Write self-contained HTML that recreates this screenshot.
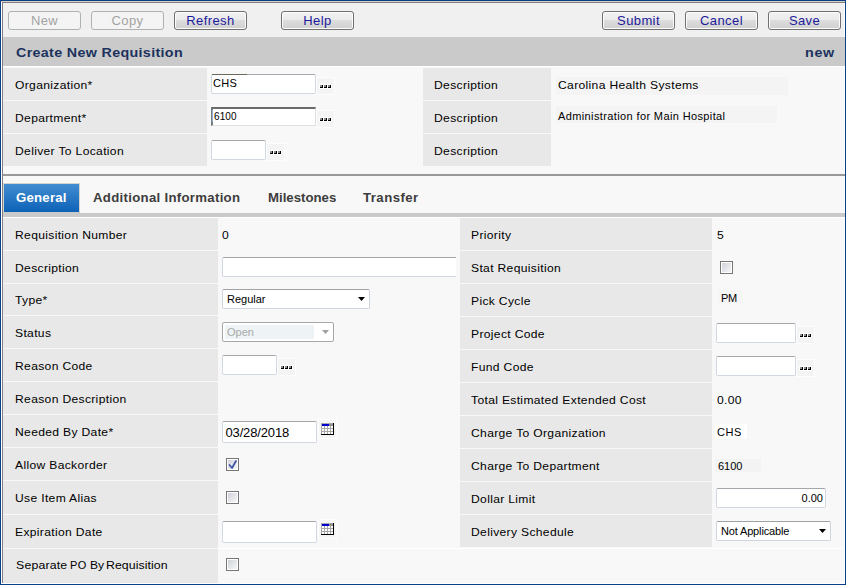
<!DOCTYPE html><html><head><meta charset="utf-8"><style>
html,body{margin:0;padding:0;}
body{width:848px;height:586px;position:relative;overflow:hidden;background:#fff;font-family:'Liberation Sans', sans-serif;}
body>div{position:absolute;box-sizing:border-box;}
.t{white-space:nowrap;}
.btn{border:1px solid #707070;border-radius:3px;background:linear-gradient(#f2f2f2 0%,#ebebeb 45%,#dddddd 50%,#cfcfcf 100%);box-shadow:inset 0 0 0 1px #fcfcfc;text-align:center;}
.btn span{position:absolute;left:0;right:0;top:2px;font-size:13px;line-height:13px;color:#1d1a9c;letter-spacing:0.4px;}
.btn.dis{border-color:#adb2b5;background:#f4f4f4;box-shadow:none;}
.btn.dis span{color:#a3a3a3;}
.inp{background:#fff;border:1px solid #d1d8e2;border-top-color:#a4a6ab;border-radius:2px;}
.inp.org{border-top:1px solid #a8a8b0;}
.inp.inset{border:1px solid #e0e0e0;border-top:2px solid #6a6a6a;border-left:2px solid #7a7a7a;border-radius:0;}
.inp.noright{border-right:none;border-radius:2px 0 0 2px;}
.sel{background:#fff;border:1px solid #cfd5dd;border-top-color:#a0a2a6;border-radius:2px;}
.seld{background:#fff;border:1px solid #a7a7a7;border-radius:2px;}
.cb{width:13px;height:13px;border:1px solid #767676;background:#fff;}
.cb i{position:absolute;left:1px;top:1px;width:9px;height:9px;background:linear-gradient(135deg,#cfd3da,#f6f6f6);}
.calf{width:19px;height:20px;background:#f6f6f6;box-shadow:inset 0 0 0 1px #fdfdfd;}
</style></head><body>
<div style="left:0px;top:0px;width:846px;height:585px;background:#0b3f87"></div>
<div style="left:1px;top:1px;width:844px;height:583px;background:#ffffff"></div>
<div style="left:1px;top:1px;width:844px;height:1px;background:#d4d0c8"></div>
<div style="left:2px;top:2px;width:843px;height:1px;background:#808080"></div>
<div style="left:2px;top:2px;width:842px;height:581px;background:#808080"></div>
<div style="left:3px;top:3px;width:841px;height:580px;background:#f8f8f8"></div>
<div style="left:3px;top:3px;width:841px;height:34px;background:#f0f0f0"></div>
<div class="btn dis" style="left:8px;top:11px;width:73px;height:19px;"><span>New</span></div>
<div class="btn dis" style="left:91px;top:11px;width:73px;height:19px;"><span>Copy</span></div>
<div class="btn" style="left:174px;top:11px;width:73px;height:19px;"><span>Refresh</span></div>
<div class="btn" style="left:281px;top:11px;width:73px;height:19px;"><span>Help</span></div>
<div class="btn" style="left:602px;top:11px;width:73px;height:19px;"><span>Submit</span></div>
<div class="btn" style="left:685px;top:11px;width:73px;height:19px;"><span>Cancel</span></div>
<div class="btn" style="left:768px;top:11px;width:73px;height:19px;"><span>Save</span></div>
<div style="left:3px;top:37px;width:842px;height:29px;background:#c9cac9"></div>
<div style="left:3px;top:66px;width:841px;height:1px;background:#ffffff"></div>
<div class="t" style="left:16px;top:46px;font-size:13px;line-height:13px;font-weight:bold;color:#1c325e;letter-spacing:0.3px;transform:scaleX(1.1);transform-origin:0 0;">Create New Requisition</div>
<div class="t" style="left:804.5px;top:46px;font-size:13px;line-height:13px;font-weight:bold;color:#1c325e;letter-spacing:0.6px;transform:scaleX(1.1);transform-origin:0 0;">new</div>
<div style="left:3px;top:68px;width:204px;height:32px;background:#e8e8e8"></div>
<div style="left:423px;top:68px;width:128px;height:32px;background:#e8e8e8"></div>
<div class="t" style="left:15px;top:80px;font-size:11px;line-height:11px;font-weight:normal;color:#000000;letter-spacing:0.3px;transform:scaleX(1.1);transform-origin:0 0;">Organization*</div>
<div class="t" style="left:434px;top:80px;font-size:11px;line-height:11px;font-weight:normal;color:#000000;letter-spacing:0.3px;transform:scaleX(1.1);transform-origin:0 0;">Description</div>
<div style="left:3px;top:101px;width:204px;height:32px;background:#e8e8e8"></div>
<div style="left:423px;top:101px;width:128px;height:32px;background:#e8e8e8"></div>
<div class="t" style="left:15px;top:113px;font-size:11px;line-height:11px;font-weight:normal;color:#000000;letter-spacing:0.3px;transform:scaleX(1.1);transform-origin:0 0;">Department*</div>
<div class="t" style="left:434px;top:113px;font-size:11px;line-height:11px;font-weight:normal;color:#000000;letter-spacing:0.3px;transform:scaleX(1.1);transform-origin:0 0;">Description</div>
<div style="left:3px;top:134px;width:204px;height:32px;background:#e8e8e8"></div>
<div style="left:423px;top:134px;width:128px;height:32px;background:#e8e8e8"></div>
<div class="t" style="left:15px;top:146px;font-size:11px;line-height:11px;font-weight:normal;color:#000000;letter-spacing:0.3px;transform:scaleX(1.1);transform-origin:0 0;">Deliver To Location</div>
<div class="t" style="left:434px;top:146px;font-size:11px;line-height:11px;font-weight:normal;color:#000000;letter-spacing:0.3px;transform:scaleX(1.1);transform-origin:0 0;">Description</div>
<div style="left:556px;top:77px;width:232px;height:18px;background:#f4f4f4"></div>
<div class="t" style="left:558px;top:80px;font-size:11px;line-height:11px;font-weight:normal;color:#000000;letter-spacing:0.3px;transform:scaleX(1.1);transform-origin:0 0;">Carolina Health Systems</div>
<div style="left:556px;top:106px;width:221px;height:17px;background:#f4f4f4"></div>
<div class="t" style="left:558px;top:111px;font-size:11px;line-height:11px;font-weight:normal;color:#000000;letter-spacing:0.38px;">Administration for Main Hospital</div>
<div class="inp org" style="left:211px;top:74px;width:105px;height:20px;"></div>
<div style="left:212px;top:74px;width:35px;height:1px;background:#6b6a5c"></div>
<div class="t" style="left:213px;top:78px;font-size:11px;line-height:11px;font-weight:normal;color:#000000;letter-spacing:0.3px;">CHS</div>
<div style="left:316px;top:77px;width:19px;height:18px;background:#f4f4f4;box-shadow:inset 0 0 0 1px #fdfdfd"></div>
<div style="left:319px;top:84px;width:5px;height:5px;background:#ffffff"></div>
<div style="left:323px;top:84px;width:5px;height:5px;background:#ffffff"></div>
<div style="left:327px;top:84px;width:5px;height:5px;background:#ffffff"></div>
<div style="left:320px;top:85px;width:3px;height:3px;background:#000"></div>
<div style="left:320px;top:85px;width:2px;height:2px;background:#8c8c8c"></div>
<div style="left:324px;top:85px;width:3px;height:3px;background:#000"></div>
<div style="left:324px;top:85px;width:2px;height:2px;background:#8c8c8c"></div>
<div style="left:328px;top:85px;width:3px;height:3px;background:#000"></div>
<div style="left:328px;top:85px;width:2px;height:2px;background:#8c8c8c"></div>
<div class="inp inset" style="left:211px;top:107px;width:105px;height:19px;"></div>
<div style="left:212px;top:110px;width:1px;height:12px;background:#8fb0d8"></div>
<div class="t" style="left:214px;top:112px;font-size:10px;line-height:10px;font-weight:normal;color:#000000;letter-spacing:0.1px;">6100</div>
<div style="left:316px;top:110px;width:19px;height:18px;background:#f4f4f4;box-shadow:inset 0 0 0 1px #fdfdfd"></div>
<div style="left:319px;top:117px;width:5px;height:5px;background:#ffffff"></div>
<div style="left:323px;top:117px;width:5px;height:5px;background:#ffffff"></div>
<div style="left:327px;top:117px;width:5px;height:5px;background:#ffffff"></div>
<div style="left:320px;top:118px;width:3px;height:3px;background:#000"></div>
<div style="left:320px;top:118px;width:2px;height:2px;background:#8c8c8c"></div>
<div style="left:324px;top:118px;width:3px;height:3px;background:#000"></div>
<div style="left:324px;top:118px;width:2px;height:2px;background:#8c8c8c"></div>
<div style="left:328px;top:118px;width:3px;height:3px;background:#000"></div>
<div style="left:328px;top:118px;width:2px;height:2px;background:#8c8c8c"></div>
<div class="inp" style="left:211px;top:140px;width:55px;height:20px;"></div>
<div style="left:266px;top:143px;width:19px;height:18px;background:#f4f4f4;box-shadow:inset 0 0 0 1px #fdfdfd"></div>
<div style="left:269px;top:150px;width:5px;height:5px;background:#ffffff"></div>
<div style="left:273px;top:150px;width:5px;height:5px;background:#ffffff"></div>
<div style="left:277px;top:150px;width:5px;height:5px;background:#ffffff"></div>
<div style="left:270px;top:151px;width:3px;height:3px;background:#000"></div>
<div style="left:270px;top:151px;width:2px;height:2px;background:#8c8c8c"></div>
<div style="left:274px;top:151px;width:3px;height:3px;background:#000"></div>
<div style="left:274px;top:151px;width:2px;height:2px;background:#8c8c8c"></div>
<div style="left:278px;top:151px;width:3px;height:3px;background:#000"></div>
<div style="left:278px;top:151px;width:2px;height:2px;background:#8c8c8c"></div>
<div style="left:3px;top:174px;width:842px;height:2px;background:#999999"></div>
<div style="left:3px;top:183px;width:77px;height:29px;background:#d6d2cc"></div>
<div style="left:4px;top:184px;width:75px;height:28px;background:linear-gradient(#428dd2,#0d62b6)"></div>
<div style="left:3px;top:212px;width:77px;height:1px;background:#c9cac9"></div>
<div class="t" style="left:16px;top:192px;font-size:12px;line-height:12px;font-weight:bold;color:#ffffff;letter-spacing:0.2px;transform:scaleX(1.1);transform-origin:0 0;">General</div>
<div class="t" style="left:93px;top:192px;font-size:12px;line-height:12px;font-weight:bold;color:#3d3d3d;letter-spacing:0.27px;transform:scaleX(1.1);transform-origin:0 0;">Additional Information</div>
<div class="t" style="left:267.5px;top:192px;font-size:12px;line-height:12px;font-weight:bold;color:#3d3d3d;letter-spacing:0.0px;transform:scaleX(1.1);transform-origin:0 0;">Milestones</div>
<div class="t" style="left:362.5px;top:192px;font-size:12px;line-height:12px;font-weight:bold;color:#3d3d3d;letter-spacing:0.4px;transform:scaleX(1.1);transform-origin:0 0;">Transfer</div>
<div style="left:3px;top:213px;width:842px;height:4px;background:#c9cac9"></div>
<div style="left:3px;top:217px;width:841px;height:1px;background:#ffffff"></div>
<div style="left:3px;top:218px;width:215px;height:32px;background:#e8e8e8"></div>
<div class="t" style="left:15px;top:230px;font-size:11px;line-height:11px;font-weight:normal;color:#000000;letter-spacing:0.3px;transform:scaleX(1.1);transform-origin:0 0;">Requisition Number</div>
<div style="left:3px;top:251px;width:215px;height:32px;background:#e8e8e8"></div>
<div class="t" style="left:15px;top:263px;font-size:11px;line-height:11px;font-weight:normal;color:#000000;letter-spacing:0.3px;transform:scaleX(1.1);transform-origin:0 0;">Description</div>
<div style="left:3px;top:284px;width:215px;height:31px;background:#e8e8e8"></div>
<div class="t" style="left:15px;top:295px;font-size:11px;line-height:11px;font-weight:normal;color:#000000;letter-spacing:0.3px;transform:scaleX(1.1);transform-origin:0 0;">Type*</div>
<div style="left:3px;top:316px;width:215px;height:32px;background:#e8e8e8"></div>
<div class="t" style="left:15px;top:328px;font-size:11px;line-height:11px;font-weight:normal;color:#000000;letter-spacing:0.3px;transform:scaleX(1.1);transform-origin:0 0;">Status</div>
<div style="left:3px;top:349px;width:215px;height:32px;background:#e8e8e8"></div>
<div class="t" style="left:15px;top:361px;font-size:11px;line-height:11px;font-weight:normal;color:#000000;letter-spacing:0.3px;transform:scaleX(1.1);transform-origin:0 0;">Reason Code</div>
<div style="left:3px;top:382px;width:215px;height:32px;background:#e8e8e8"></div>
<div class="t" style="left:15px;top:394px;font-size:11px;line-height:11px;font-weight:normal;color:#000000;letter-spacing:0.3px;transform:scaleX(1.1);transform-origin:0 0;">Reason Description</div>
<div style="left:3px;top:415px;width:215px;height:32px;background:#e8e8e8"></div>
<div class="t" style="left:15px;top:427px;font-size:11px;line-height:11px;font-weight:normal;color:#000000;letter-spacing:0.3px;transform:scaleX(1.1);transform-origin:0 0;">Needed By Date*</div>
<div style="left:3px;top:448px;width:215px;height:32px;background:#e8e8e8"></div>
<div class="t" style="left:15px;top:460px;font-size:11px;line-height:11px;font-weight:normal;color:#000000;letter-spacing:0.3px;transform:scaleX(1.1);transform-origin:0 0;">Allow Backorder</div>
<div style="left:3px;top:481px;width:215px;height:33px;background:#e8e8e8"></div>
<div class="t" style="left:15px;top:493px;font-size:11px;line-height:11px;font-weight:normal;color:#000000;letter-spacing:0.3px;transform:scaleX(1.1);transform-origin:0 0;">Use Item Alias</div>
<div style="left:3px;top:515px;width:215px;height:33px;background:#e8e8e8"></div>
<div class="t" style="left:15px;top:527px;font-size:11px;line-height:11px;font-weight:normal;color:#000000;letter-spacing:0.3px;transform:scaleX(1.1);transform-origin:0 0;">Expiration Date</div>
<div style="left:3px;top:549px;width:215px;height:34px;background:#e8e8e8"></div>
<div class="t" style="left:15.8px;top:560px;font-size:11px;line-height:11px;font-weight:normal;color:#000000;letter-spacing:0.15px;transform:scaleX(1.12);transform-origin:0 0;">Separate</div>
<div class="t" style="left:70px;top:560px;font-size:11px;line-height:11px;font-weight:normal;color:#000000;letter-spacing:0.5px;">PO</div>
<div class="t" style="left:90px;top:560px;font-size:11px;line-height:11px;font-weight:normal;color:#000000;letter-spacing:0px;transform:scaleX(1.1);transform-origin:0 0;">By</div>
<div class="t" style="left:105.6px;top:560px;font-size:11px;line-height:11px;font-weight:normal;color:#000000;letter-spacing:0.05px;transform:scaleX(1.12);transform-origin:0 0;">Requisition</div>
<div style="left:460px;top:218px;width:252px;height:32px;background:#e8e8e8"></div>
<div class="t" style="left:470.5px;top:230px;font-size:11px;line-height:11px;font-weight:normal;color:#000000;letter-spacing:0.3px;transform:scaleX(1.1);transform-origin:0 0;">Priority</div>
<div style="left:460px;top:251px;width:252px;height:32px;background:#e8e8e8"></div>
<div class="t" style="left:470.5px;top:263px;font-size:11px;line-height:11px;font-weight:normal;color:#000000;letter-spacing:0.3px;transform:scaleX(1.1);transform-origin:0 0;">Stat Requisition</div>
<div style="left:460px;top:284px;width:252px;height:32px;background:#e8e8e8"></div>
<div class="t" style="left:470.5px;top:296px;font-size:11px;line-height:11px;font-weight:normal;color:#000000;letter-spacing:0.3px;transform:scaleX(1.1);transform-origin:0 0;">Pick Cycle</div>
<div style="left:460px;top:317px;width:252px;height:32px;background:#e8e8e8"></div>
<div class="t" style="left:470.5px;top:329px;font-size:11px;line-height:11px;font-weight:normal;color:#000000;letter-spacing:0.3px;transform:scaleX(1.1);transform-origin:0 0;">Project Code</div>
<div style="left:460px;top:350px;width:252px;height:32px;background:#e8e8e8"></div>
<div class="t" style="left:470.5px;top:362px;font-size:11px;line-height:11px;font-weight:normal;color:#000000;letter-spacing:0.3px;transform:scaleX(1.1);transform-origin:0 0;">Fund Code</div>
<div style="left:460px;top:383px;width:252px;height:32px;background:#e8e8e8"></div>
<div class="t" style="left:470.5px;top:395px;font-size:11px;line-height:11px;font-weight:normal;color:#000000;letter-spacing:0.3px;transform:scaleX(1.1);transform-origin:0 0;">Total Estimated Extended Cost</div>
<div style="left:460px;top:416px;width:252px;height:32px;background:#e8e8e8"></div>
<div class="t" style="left:470.5px;top:428px;font-size:11px;line-height:11px;font-weight:normal;color:#000000;letter-spacing:0.3px;transform:scaleX(1.1);transform-origin:0 0;">Charge To Organization</div>
<div style="left:460px;top:449px;width:252px;height:32px;background:#e8e8e8"></div>
<div class="t" style="left:470.5px;top:461px;font-size:11px;line-height:11px;font-weight:normal;color:#000000;letter-spacing:0.3px;transform:scaleX(1.1);transform-origin:0 0;">Charge To Department</div>
<div style="left:460px;top:482px;width:252px;height:32px;background:#e8e8e8"></div>
<div class="t" style="left:470.5px;top:494px;font-size:11px;line-height:11px;font-weight:normal;color:#000000;letter-spacing:0.3px;transform:scaleX(1.1);transform-origin:0 0;">Dollar Limit</div>
<div style="left:460px;top:515px;width:252px;height:32px;background:#e8e8e8"></div>
<div class="t" style="left:470.5px;top:527px;font-size:11px;line-height:11px;font-weight:normal;color:#000000;letter-spacing:0.3px;transform:scaleX(1.1);transform-origin:0 0;">Delivery Schedule</div>
<div style="left:218px;top:548px;width:627px;height:1px;background:#ffffff"></div>
<div class="t" style="left:222px;top:230px;font-size:11px;line-height:11px;font-weight:normal;color:#000000;letter-spacing:0.3px;transform:scaleX(1.1);transform-origin:0 0;">0</div>
<div class="inp noright" style="left:222px;top:257px;width:234px;height:20px;"></div>
<div class="sel" style="left:222px;top:289px;width:148px;height:20px;"></div>
<div class="t" style="left:227px;top:294px;font-size:11px;line-height:11px;font-weight:normal;color:#000;letter-spacing:0px;">Regular</div>
<svg style="position:absolute;left:358px;top:297px" width="9" height="5"><path d="M0 0 H7 L3.5 4 Z" fill="#000"/></svg>
<div class="seld" style="left:222px;top:322px;width:112px;height:20px;"></div>
<div style="left:225px;top:325px;width:89px;height:14px;background:#eef4f6"></div>
<div class="t" style="left:227px;top:327px;font-size:11px;line-height:11px;font-weight:normal;color:#a9a9a9;letter-spacing:0px;">Open</div>
<svg style="position:absolute;left:322px;top:330px" width="9" height="5"><path d="M0 0 H7 L3.5 4 Z" fill="#a0a0a0"/></svg>
<div class="inp" style="left:222px;top:355px;width:55px;height:20px;"></div>
<div style="left:277px;top:358px;width:19px;height:18px;background:#f4f4f4;box-shadow:inset 0 0 0 1px #fdfdfd"></div>
<div style="left:280px;top:365px;width:5px;height:5px;background:#ffffff"></div>
<div style="left:284px;top:365px;width:5px;height:5px;background:#ffffff"></div>
<div style="left:288px;top:365px;width:5px;height:5px;background:#ffffff"></div>
<div style="left:281px;top:366px;width:3px;height:3px;background:#000"></div>
<div style="left:281px;top:366px;width:2px;height:2px;background:#8c8c8c"></div>
<div style="left:285px;top:366px;width:3px;height:3px;background:#000"></div>
<div style="left:285px;top:366px;width:2px;height:2px;background:#8c8c8c"></div>
<div style="left:289px;top:366px;width:3px;height:3px;background:#000"></div>
<div style="left:289px;top:366px;width:2px;height:2px;background:#8c8c8c"></div>
<div class="inp" style="left:222px;top:421px;width:95px;height:22px;"></div>
<div class="t" style="left:225.5px;top:426px;font-size:13px;line-height:13px;font-weight:normal;color:#000;letter-spacing:-0.15px;">03/28/2018</div>
<div class="calf" style="left:318px;top:419px"></div>
<svg style="position:absolute;left:321px;top:423px" width="13" height="12" viewBox="0 0 13 12" shape-rendering="crispEdges"><rect x="0" y="0" width="13" height="12" fill="#a8a8a8"/><rect x="1" y="1" width="7" height="2" fill="#0000d0"/><rect x="8" y="1" width="4" height="2" fill="#909090"/><rect x="1" y="3" width="2" height="2" fill="#ffffff"/><rect x="1" y="6" width="2" height="2" fill="#ffffff"/><rect x="1" y="9" width="2" height="2" fill="#ffffff"/><rect x="4" y="3" width="2" height="2" fill="#ffffff"/><rect x="4" y="6" width="2" height="2" fill="#ffffff"/><rect x="4" y="9" width="2" height="2" fill="#ffffff"/><rect x="7" y="3" width="2" height="2" fill="#ffffff"/><rect x="7" y="6" width="2" height="2" fill="#ffffff"/><rect x="7" y="9" width="2" height="2" fill="#ffffff"/><rect x="10" y="3" width="2" height="2" fill="#ffffff"/><rect x="10" y="6" width="2" height="2" fill="#ffffff"/><rect x="10" y="9" width="2" height="2" fill="#ffffff"/><rect x="12" y="0" width="1" height="12" fill="#000"/><rect x="0" y="11" width="13" height="1" fill="#000"/></svg>
<div class="cb" style="left:226px;top:458px;"><i></i></div>
<svg style="position:absolute;left:226px;top:458px" width="13" height="13" viewBox="0 0 13 13"><path d="M3.5 7 L6 10 L10 3" stroke="#3d55a5" stroke-width="1.7" fill="none" stroke-linecap="round" stroke-linejoin="round"/></svg>
<div class="cb" style="left:226px;top:491px;"><i></i></div>
<div class="inp" style="left:222px;top:521px;width:95px;height:22px;"></div>
<div class="calf" style="left:318px;top:519px"></div>
<svg style="position:absolute;left:321px;top:523px" width="13" height="12" viewBox="0 0 13 12" shape-rendering="crispEdges"><rect x="0" y="0" width="13" height="12" fill="#a8a8a8"/><rect x="1" y="1" width="7" height="2" fill="#0000d0"/><rect x="8" y="1" width="4" height="2" fill="#909090"/><rect x="1" y="3" width="2" height="2" fill="#ffffff"/><rect x="1" y="6" width="2" height="2" fill="#ffffff"/><rect x="1" y="9" width="2" height="2" fill="#ffffff"/><rect x="4" y="3" width="2" height="2" fill="#ffffff"/><rect x="4" y="6" width="2" height="2" fill="#ffffff"/><rect x="4" y="9" width="2" height="2" fill="#ffffff"/><rect x="7" y="3" width="2" height="2" fill="#ffffff"/><rect x="7" y="6" width="2" height="2" fill="#ffffff"/><rect x="7" y="9" width="2" height="2" fill="#ffffff"/><rect x="10" y="3" width="2" height="2" fill="#ffffff"/><rect x="10" y="6" width="2" height="2" fill="#ffffff"/><rect x="10" y="9" width="2" height="2" fill="#ffffff"/><rect x="12" y="0" width="1" height="12" fill="#000"/><rect x="0" y="11" width="13" height="1" fill="#000"/></svg>
<div class="cb" style="left:226px;top:558px;"><i></i></div>
<div class="t" style="left:717px;top:230px;font-size:11px;line-height:11px;font-weight:normal;color:#000000;letter-spacing:0.3px;transform:scaleX(1.1);transform-origin:0 0;">5</div>
<div class="cb" style="left:720px;top:261px;"><i></i></div>
<div style="left:718px;top:290px;width:25px;height:13px;background:#f5f5f5"></div>
<div class="t" style="left:721px;top:293px;font-size:11px;line-height:11px;font-weight:normal;color:#000000;letter-spacing:-0.3px;">PM</div>
<div class="inp" style="left:716px;top:323px;width:80px;height:20px;"></div>
<div style="left:796px;top:326px;width:19px;height:18px;background:#f4f4f4;box-shadow:inset 0 0 0 1px #fdfdfd"></div>
<div style="left:799px;top:333px;width:5px;height:5px;background:#ffffff"></div>
<div style="left:803px;top:333px;width:5px;height:5px;background:#ffffff"></div>
<div style="left:807px;top:333px;width:5px;height:5px;background:#ffffff"></div>
<div style="left:800px;top:334px;width:3px;height:3px;background:#000"></div>
<div style="left:800px;top:334px;width:2px;height:2px;background:#8c8c8c"></div>
<div style="left:804px;top:334px;width:3px;height:3px;background:#000"></div>
<div style="left:804px;top:334px;width:2px;height:2px;background:#8c8c8c"></div>
<div style="left:808px;top:334px;width:3px;height:3px;background:#000"></div>
<div style="left:808px;top:334px;width:2px;height:2px;background:#8c8c8c"></div>
<div class="inp" style="left:716px;top:356px;width:80px;height:20px;"></div>
<div style="left:796px;top:359px;width:19px;height:18px;background:#f4f4f4;box-shadow:inset 0 0 0 1px #fdfdfd"></div>
<div style="left:799px;top:366px;width:5px;height:5px;background:#ffffff"></div>
<div style="left:803px;top:366px;width:5px;height:5px;background:#ffffff"></div>
<div style="left:807px;top:366px;width:5px;height:5px;background:#ffffff"></div>
<div style="left:800px;top:367px;width:3px;height:3px;background:#000"></div>
<div style="left:800px;top:367px;width:2px;height:2px;background:#8c8c8c"></div>
<div style="left:804px;top:367px;width:3px;height:3px;background:#000"></div>
<div style="left:804px;top:367px;width:2px;height:2px;background:#8c8c8c"></div>
<div style="left:808px;top:367px;width:3px;height:3px;background:#000"></div>
<div style="left:808px;top:367px;width:2px;height:2px;background:#8c8c8c"></div>
<div class="t" style="left:716.5px;top:395px;font-size:11px;line-height:11px;font-weight:normal;color:#000000;letter-spacing:0.3px;transform:scaleX(1.1);transform-origin:0 0;">0.00</div>
<div style="left:715px;top:424px;width:32px;height:15px;background:#ffffff"></div>
<div class="t" style="left:717px;top:427px;font-size:11px;line-height:11px;font-weight:normal;color:#000000;letter-spacing:0.5px;">CHS</div>
<div style="left:715px;top:459px;width:46px;height:13px;background:#f3f3f3"></div>
<div class="t" style="left:718px;top:461px;font-size:11px;line-height:11px;font-weight:normal;color:#000000;letter-spacing:0px;">6100</div>
<div class="inp" style="left:716px;top:488px;width:110px;height:20px;"></div>
<div class="t" style="right:25px;top:493px;font-size:11px;line-height:11px;font-weight:normal;color:#000;letter-spacing:0px;">0.00</div>
<div class="sel" style="left:716px;top:521px;width:115px;height:20px;"></div>
<div class="t" style="left:721px;top:526px;font-size:11px;line-height:11px;font-weight:normal;color:#000;letter-spacing:-0.15px;">Not Applicable</div>
<svg style="position:absolute;left:819px;top:529px" width="9" height="5"><path d="M0 0 H7 L3.5 4 Z" fill="#000"/></svg>
</body></html>
